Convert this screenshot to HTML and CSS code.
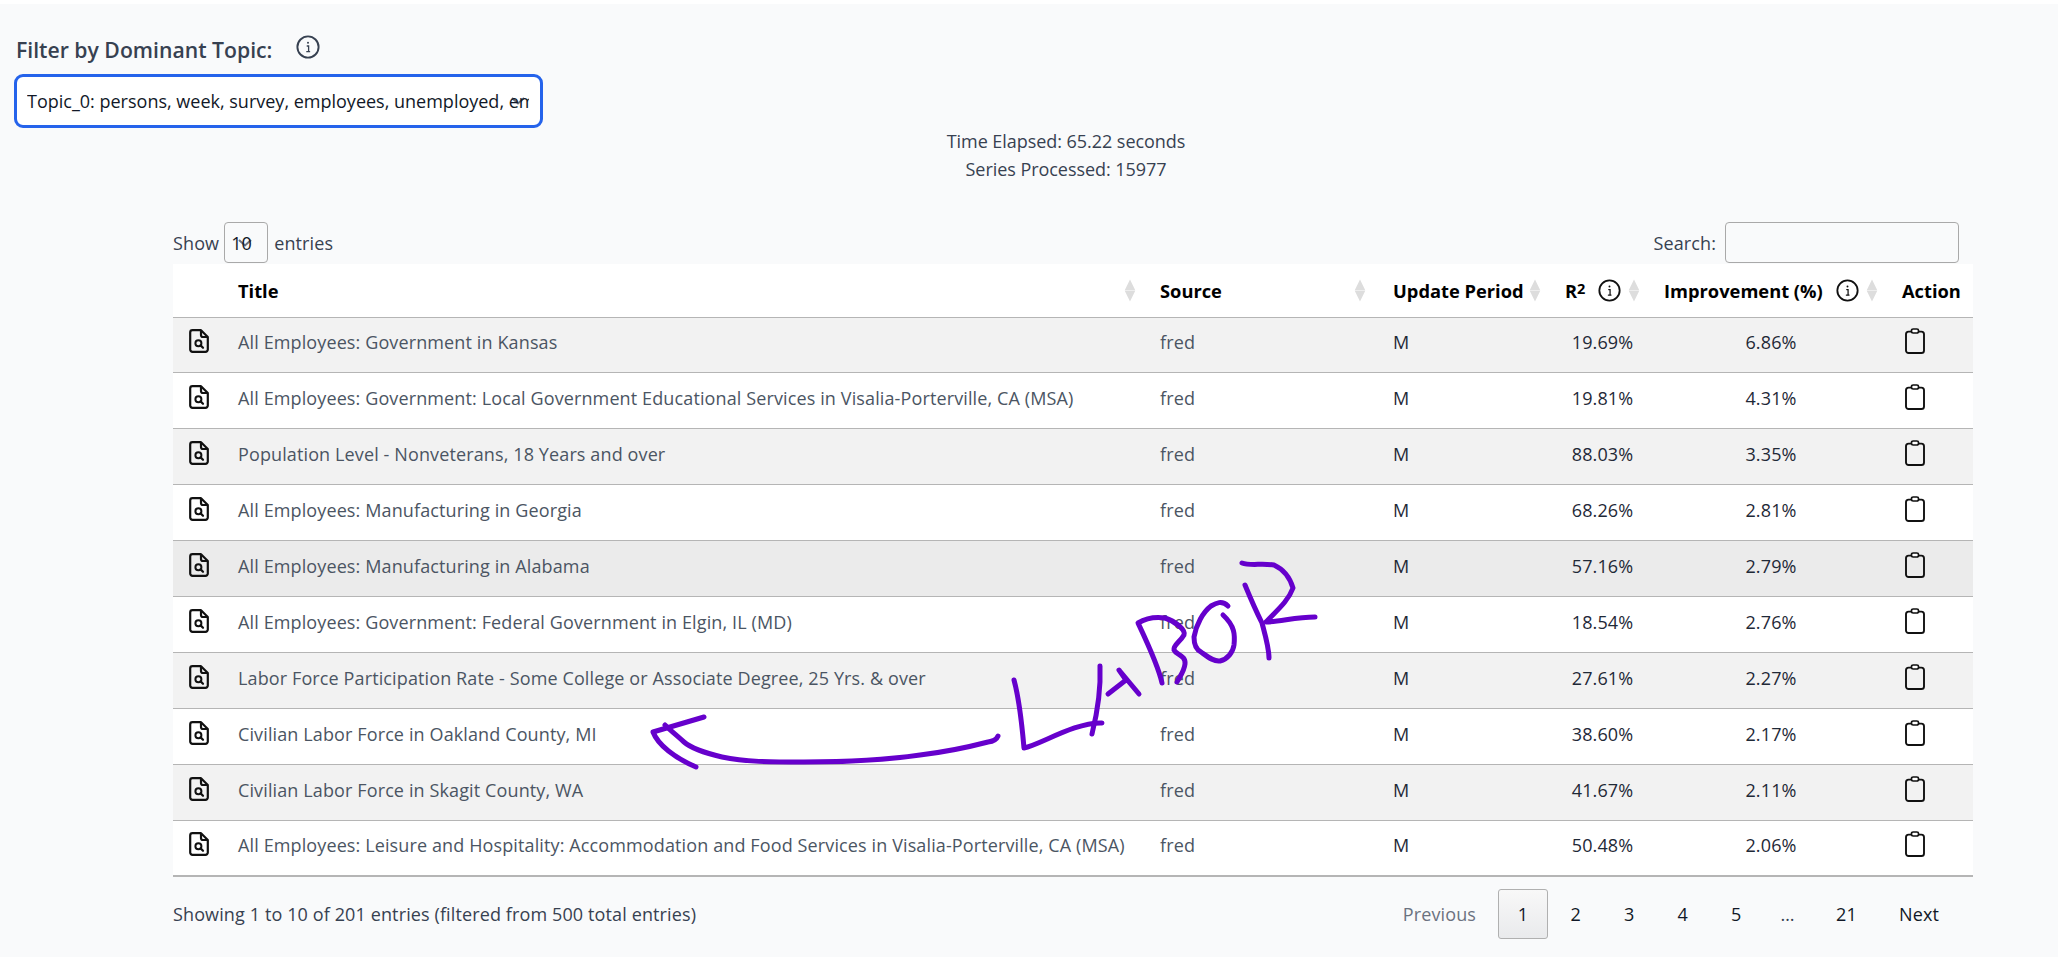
FILE: index.html
```html
<!DOCTYPE html>
<html lang="en">
<head>
<meta charset="utf-8">
<title>Filter by Dominant Topic</title>
<link rel="stylesheet" href="styles.css">
</head>
<body>
<svg class="sprites" width="0" height="0" aria-hidden="true">
  <symbol id="i-info" viewBox="0 0 24 24"><circle cx="12" cy="12" r="10.6" fill="none" stroke="currentColor" stroke-width="1.9"/><path d="M11.2 11h1.4v5.6M10.8 16.7h2.8" fill="none" stroke="currentColor" stroke-width="1.3" stroke-linecap="round"/><circle cx="12" cy="7.8" r="1" fill="currentColor"/></symbol>
  <symbol id="i-sort" viewBox="0 0 12 24"><path d="M6 0.5 11.5 11.7H.5zM6 23.5 .5 12.3h11z" fill="#dddddd"/></symbol>
  <symbol id="i-doc" viewBox="0 0 20 24"><path d="M12 1.2H3.5A2.3 2.3 0 0 0 1.2 3.5v17a2.3 2.3 0 0 0 2.3 2.3h13a2.3 2.3 0 0 0 2.3-2.3V8z" fill="none" stroke="#111" stroke-width="2.2" stroke-linejoin="round"/><path d="M12 1.2V6a2 2 0 0 0 2 2h4.8" fill="none" stroke="#111" stroke-width="2.2"/><circle cx="9.4" cy="14.2" r="3" fill="none" stroke="#111" stroke-width="2"/><path d="M11.6 16.4 14 18.8" stroke="#111" stroke-width="2.2" stroke-linecap="round"/></symbol>
  <symbol id="i-clip" viewBox="0 0 20 26"><rect x="1" y="3.6" width="18" height="21.4" rx="2.6" fill="none" stroke="#111" stroke-width="1.9"/><rect x="6.5" y="1" width="7" height="4" rx="1.6" fill="#fff" stroke="#111" stroke-width="1.7"/></symbol>
</svg>

<main class="page">
  <section class="filter">
    <div class="filter-head">
      <label class="filter-label" for="topic">Filter by Dominant Topic:</label>
      <svg class="info-lg"><use href="#i-info"/></svg>
    </div>
    <select class="topic-select" id="topic">
      <option>Topic_0: persons, week, survey, employees, unemployed, employment, labor</option>
    </select>
  </section>

  <section class="stats">
    <p>Time Elapsed: 65.22 seconds</p>
    <p>Series Processed: 15977</p>
  </section>

  <section class="dt">
    <div class="dt-top">
      <div class="dt-length">Show <select class="len-select"><option>10</option></select> entries</div>
      <div class="dt-search">Search: <input class="search-input" type="text"></div>
    </div>
    <table class="data">
      <thead>
        <tr>
          <th class="c-icon"></th>
          <th class="c-title"><span class="th-in">Title<svg class="sort"><use href="#i-sort"/></svg></span></th>
          <th class="c-source"><span class="th-in">Source<svg class="sort"><use href="#i-sort"/></svg></span></th>
          <th class="c-period"><span class="th-in">Update Period<svg class="sort"><use href="#i-sort"/></svg></span></th>
          <th class="c-r2"><span class="th-in"><span>R<sup>2</sup><svg class="info"><use href="#i-info"/></svg></span><svg class="sort"><use href="#i-sort"/></svg></span></th>
          <th class="c-imp"><span class="th-in"><span>Improvement (%)<svg class="info"><use href="#i-info"/></svg></span><svg class="sort"><use href="#i-sort"/></svg></span></th>
          <th class="c-action">Action</th>
        </tr>
      </thead>
      <tbody>
        <tr><td class="ic"><svg class="doc"><use href="#i-doc"/></svg></td><td class="muted">All Employees: Government in Kansas</td><td class="muted">fred</td><td>M</td><td class="num">19.69%</td><td class="num">6.86%</td><td class="act"><svg class="clip"><use href="#i-clip"/></svg></td></tr>
        <tr><td class="ic"><svg class="doc"><use href="#i-doc"/></svg></td><td class="muted">All Employees: Government: Local Government Educational Services in Visalia-Porterville, CA (MSA)</td><td class="muted">fred</td><td>M</td><td class="num">19.81%</td><td class="num">4.31%</td><td class="act"><svg class="clip"><use href="#i-clip"/></svg></td></tr>
        <tr><td class="ic"><svg class="doc"><use href="#i-doc"/></svg></td><td class="muted">Population Level - Nonveterans, 18 Years and over</td><td class="muted">fred</td><td>M</td><td class="num">88.03%</td><td class="num">3.35%</td><td class="act"><svg class="clip"><use href="#i-clip"/></svg></td></tr>
        <tr><td class="ic"><svg class="doc"><use href="#i-doc"/></svg></td><td class="muted">All Employees: Manufacturing in Georgia</td><td class="muted">fred</td><td>M</td><td class="num">68.26%</td><td class="num">2.81%</td><td class="act"><svg class="clip"><use href="#i-clip"/></svg></td></tr>
        <tr class="hover"><td class="ic"><svg class="doc"><use href="#i-doc"/></svg></td><td class="muted">All Employees: Manufacturing in Alabama</td><td class="muted">fred</td><td>M</td><td class="num">57.16%</td><td class="num">2.79%</td><td class="act"><svg class="clip"><use href="#i-clip"/></svg></td></tr>
        <tr><td class="ic"><svg class="doc"><use href="#i-doc"/></svg></td><td class="muted">All Employees: Government: Federal Government in Elgin, IL (MD)</td><td class="muted">fred</td><td>M</td><td class="num">18.54%</td><td class="num">2.76%</td><td class="act"><svg class="clip"><use href="#i-clip"/></svg></td></tr>
        <tr><td class="ic"><svg class="doc"><use href="#i-doc"/></svg></td><td class="muted">Labor Force Participation Rate - Some College or Associate Degree, 25 Yrs. &amp; over</td><td class="muted">fred</td><td>M</td><td class="num">27.61%</td><td class="num">2.27%</td><td class="act"><svg class="clip"><use href="#i-clip"/></svg></td></tr>
        <tr><td class="ic"><svg class="doc"><use href="#i-doc"/></svg></td><td class="muted">Civilian Labor Force in Oakland County, MI</td><td class="muted">fred</td><td>M</td><td class="num">38.60%</td><td class="num">2.17%</td><td class="act"><svg class="clip"><use href="#i-clip"/></svg></td></tr>
        <tr><td class="ic"><svg class="doc"><use href="#i-doc"/></svg></td><td class="muted">Civilian Labor Force in Skagit County, WA</td><td class="muted">fred</td><td>M</td><td class="num">41.67%</td><td class="num">2.11%</td><td class="act"><svg class="clip"><use href="#i-clip"/></svg></td></tr>
        <tr><td class="ic"><svg class="doc"><use href="#i-doc"/></svg></td><td class="muted">All Employees: Leisure and Hospitality: Accommodation and Food Services in Visalia-Porterville, CA (MSA)</td><td class="muted">fred</td><td>M</td><td class="num">50.48%</td><td class="num">2.06%</td><td class="act"><svg class="clip"><use href="#i-clip"/></svg></td></tr>
      </tbody>
    </table>
    <div class="dt-bottom">
      <div class="dt-info">Showing 1 to 10 of 201 entries (filtered from 500 total entries)</div>
      <nav class="pager">
        <a class="pg prev">Previous</a>
        <a class="pg cur">1</a>
        <a class="pg">2</a>
        <a class="pg">3</a>
        <a class="pg">4</a>
        <a class="pg">5</a>
        <span class="pg dots">…</span>
        <a class="pg last">21</a>
        <a class="pg next">Next</a>
      </nav>
    </div>
  </section>
</main>

<svg class="scribble" viewBox="0 0 2058 957" aria-hidden="true">
  <g fill="none" stroke="#6600cc" stroke-width="5" stroke-linecap="round" stroke-linejoin="round">
    <path d="M998 736Q996 741 988 742C965 748 945 752 920 755C885 760 850 762 804 762C770 762 745 762 722 757C705 753 692 749 684 742C675 734 670 730 665 725"/>
    <path d="M704 717 653 732C658 745 675 758 696 767"/>
    <path d="M1014 680C1020 702 1022 725 1024 748C1040 745 1075 722 1102 723"/>
    <path d="M1100 666C1101 690 1098 710 1092 734"/>
    <path d="M1108 694 1126 680 1119 670 1139 694"/>
    <path d="M1162 683C1158 665 1146 640 1138 623C1148 617 1158 617 1165 618C1175 621 1186 630 1184 635C1180 642 1173 645 1174 650C1176 655 1186 655 1185 664C1184 672 1180 676 1177 682"/>
    <path d="M1228 606C1222 600 1216 603 1211 606C1203 612 1196 625 1194 637C1194 645 1197 650 1201 652C1208 657 1214 662 1220 661C1228 659 1233 652 1234 645C1235 635 1235 626 1223 615"/>
    <path d="M1245 585C1252 602 1258 615 1262 623C1266 638 1269 648 1269 658"/>
    <path d="M1242 563C1250 566 1262 563 1274 565C1285 570 1290 578 1293 588C1288 602 1275 612 1266 622C1280 622 1295 617 1315 617"/>
  </g>
</svg>
</body>
</html>
```
FILE: styles.css
```css
* { box-sizing: border-box; }
html, body { margin: 0; height: 100%; }
body {
  background: #f9fafb;
  color: #111827;
  font-family: "Open Sans", "Noto Sans", sans-serif;
  font-size: 18px;
  letter-spacing: 0.12px;
  border-top: 4px solid #ffffff;
  position: relative;
  overflow: hidden;
}
.sprites { position: absolute; }
.page { height: 953px; }

.filter { padding: 31px 0 0 14px; }
.filter-head { display: flex; align-items: center; height: 28px; }
.filter-label { margin-left: 2px; font-size: 21.2px; font-weight: 600; color: #374151; letter-spacing: 0; }
.info-lg { width: 24px; height: 24px; margin-left: 24px; color: #374151; margin-top: -4px; }
.topic-select {
  display: block;
  width: 529px;
  height: 54px;
  margin-top: 11px;
  padding: 0 11px 0 10px;
  border: 3px solid #2563eb;
  border-radius: 9px;
  background: #ffffff url("data:image/svg+xml,%3Csvg xmlns='http://www.w3.org/2000/svg' viewBox='0 0 14 8'%3E%3Cpath d='M1 1l6 5.5L13 1' fill='none' stroke='%236b7280' stroke-width='2'/%3E%3C/svg%3E") no-repeat right 15px center / 14px 8px;
  color: #111827;
  font: inherit;
  letter-spacing: 0;
  appearance: none;
  -webkit-appearance: none;
}

.stats { padding-left: 74px; text-align: center; color: #374151; letter-spacing: -0.05px; }
.stats p { margin: 0; line-height: 28px; }
.stats p:first-child { margin-top: -1px; }

.dt { margin: 39px 0 0 173px; width: 1800px; color: #374151; }
.dt-top { display: flex; justify-content: space-between; padding-right: 14px; height: 42px; }
.dt-length { display: flex; align-items: center; gap: 5px; height: 41px; }
.len-select {
  width: 44px; height: 41px; padding: 0 0 0 6px; margin-right: 1px;
  border: 1px solid #a9a9a9; border-radius: 4px;
  background: transparent url("data:image/svg+xml,%3Csvg xmlns='http://www.w3.org/2000/svg' viewBox='0 0 14 8'%3E%3Cpath d='M1 1l6 5.5L13 1' fill='none' stroke='%236b7280' stroke-width='2'/%3E%3C/svg%3E") no-repeat right 15px center / 14px 8px;
  color: #111827; font: inherit;
  appearance: none; -webkit-appearance: none;
}
.dt-search { display: flex; align-items: center; gap: 9px; height: 41px; }
.search-input { width: 234px; height: 41px; border: 1px solid #a9a9a9; border-radius: 4px; background: transparent; }

.data { width: 1800px; table-layout: fixed; border-collapse: collapse; background: #ffffff; }
.data th { height: 53px; padding: 0 12px; text-align: left; font-weight: 700; color: #000; border-bottom: 1px solid #b5b5b5; white-space: nowrap; font-size: 18.3px; letter-spacing: 0; }
.data td { height: 55.9px; padding: 0 12px 5px; border-bottom: 1px solid #b5b5b5; white-space: nowrap; color: #1f2937; }
.data tbody tr:nth-child(odd) { background: #f2f2f2; }
.data tbody tr.hover { background: #ebebeb; }
.data tbody tr:last-child td { border-bottom-width: 2px; }
.data td.muted { color: #4b5563; }
.c-icon { width: 53px; }
.c-title { width: 922px; }
.c-source { width: 233px; }
.c-period { width: 172px; }
.c-r2 { width: 99px; }
.c-imp { width: 238px; }
.c-action { width: 83px; }
.data th.c-source { padding-right: 15px; }
.data th.c-action { padding-right: 0; }
.th-in { display: flex; align-items: center; justify-content: space-between; }
.th-in > span { display: inline-flex; align-items: center; }
.data sup { font-size: 14.5px; line-height: 0; position: relative; top: -1px; vertical-align: super; }
.sort { width: 12px; height: 23px; flex: none; }
.info { width: 23px; height: 23px; margin-left: 13px; color: #111; }
.doc { display: block; width: 20px; height: 24px; margin: 0 0 2px 4px; }
.clip { display: block; width: 20px; height: 26px; margin-bottom: 2px; }
.data td.num { text-align: center; color: #1f2937; }
.data td.ic { padding-right: 0; }
.data td.act { padding-left: 15px; }

.dt-bottom { display: flex; justify-content: space-between; align-items: center; height: 50px; margin-top: 12px; padding-right: 34px; }
.pager { display: flex; align-items: center; }
.pg { display: flex; align-items: center; justify-content: center; height: 50px; width: 53.5px; color: #111827; }
.prev { width: auto; margin-right: 22px; color: #6b7280; }
.cur { width: 50px; margin-right: 1px; border: 1px solid #b0b0b0; border-radius: 3px; background: linear-gradient(#f8f8f8, #e9eaec); }
.dots { width: 49px; color: #374151; }
.last { width: 69px; }
.next { width: auto; margin-left: 18px; }

.scribble { position: absolute; left: 0; top: -4px; width: 2058px; height: 957px; pointer-events: none; }
```
